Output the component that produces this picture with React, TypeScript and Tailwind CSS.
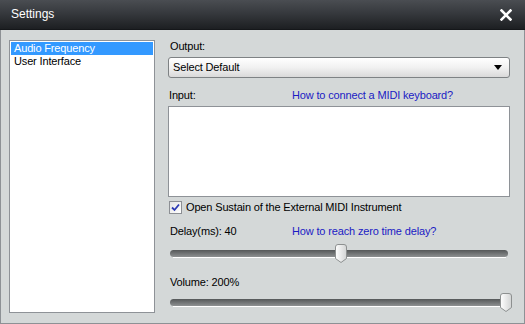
import React, { useState } from 'react';

const ITEMS = ['Audio Frequency', 'User Interface'];

// Small XP-style slider with a pointed thumb
const Slider: React.FC<{ value: number }> = ({ value }) => (
  <div className="relative h-[19px] w-[341px]">
    <div className="absolute left-[1px] right-[2px] top-[6px] h-[7px] rounded-full bg-gradient-to-b from-[#555859] to-[#8e9192]" />
    <div className="absolute left-[4px] right-[4px] top-[13px] h-[1px] bg-white" />
    <svg
      className="absolute top-0"
      style={{ left: `${value * 331}px` }}
      width="12"
      height="19"
      viewBox="0 0 12 19"
    >
      <defs>
        <linearGradient id={`thumb${value}`} x1="0" y1="0" x2="1" y2="0">
          <stop offset="0" stopColor="#ffffff" />
          <stop offset="1" stopColor="#d2d4d4" />
        </linearGradient>
      </defs>
      <path
        d="M3 0.5 H9 Q11.5 0.5 11.5 3 V14.5 L6 18.5 L0.5 14.5 V3 Q0.5 0.5 3 0.5 Z"
        fill={`url(#thumb${value})`}
        stroke="#8d9090"
      />
    </svg>
  </div>
);

export default function App() {
  const [selected, setSelected] = useState(0);
  const [sustain, setSustain] = useState(true);

  return (
    <div className="w-[525px] h-[324px] flex flex-col bg-[#d4d8d8] font-['Liberation_Sans',Arial,sans-serif] text-[11px] leading-[13px] tracking-[-0.15px] text-black select-none overflow-hidden">
      {/* title bar */}
      <div className="h-[30px] shrink-0 flex items-center justify-between pl-[11px] pr-[13px] bg-gradient-to-b from-[#4a4d52] via-[#34373b] to-[#1d1f22] border-b border-[#15171a]">
        <span className="text-white text-[12px] tracking-normal">Settings</span>
        <svg width="12" height="12" viewBox="0 0 12 12">
          <path d="M1.5 1.5 L10.5 10.5 M10.5 1.5 L1.5 10.5" stroke="#ffffff" strokeWidth="2.6" strokeLinecap="square" />
        </svg>
      </div>

      {/* body */}
      <div className="flex-1 flex gap-[13px] pl-[8px] pr-[14px] pt-[10px] border-x border-b border-[#8d9195]">
        {/* left list */}
        <div className="w-[146px] h-[273px] bg-white border border-[#8e9297] p-[1px]">
          {ITEMS.map((item, idx) => (
            <div
              key={item}
              onClick={() => setSelected(idx)}
              className={`h-[13px] pl-[3px] pr-[1px] ${selected === idx ? 'bg-[#3399ff] text-white' : 'text-black'}`}
            >
              {item}
            </div>
          ))}
        </div>

        {/* right settings */}
        <div className="flex-1 flex flex-col">
          <div className="h-[13px] pl-[2px]">Output:</div>
          <div className="mt-[4px] h-[21px] flex items-center justify-between pl-[4px] pr-[7px] rounded-[3px] border border-[#7e8284] bg-gradient-to-b from-[#ffffff] via-[#f1f1f1] to-[#d9d9d9]">
            <span>Select Default</span>
            <svg width="8" height="5" viewBox="0 0 8 5">
              <path d="M0 0 H8 L4 5 Z" fill="#000" />
            </svg>
          </div>

          <div className="mt-[11px] h-[13px] flex pl-[1px]">
            <span className="w-[123px]">Input:</span>
            <span className="text-[#1b1bc4]">How to connect a MIDI keyboard?</span>
          </div>
          <div className="mt-[4px] h-[91px] bg-white border border-[#8e9297]" />

          <label className="mt-[4px] h-[13px] flex items-center gap-[4px] pl-[1px]">
            <span
              onClick={() => setSustain(!sustain)}
              className="w-[13px] h-[13px] flex items-center justify-center border border-[#8c8f94] bg-gradient-to-br from-[#e4e4e4] to-[#ffffff]"
            >
              {sustain && (
                <svg width="9" height="9" viewBox="0 0 9 9">
                  <path d="M1 4.5 L3.5 7 L8 1.5" stroke="#2c3ab4" strokeWidth="1.8" fill="none" />
                </svg>
              )}
            </span>
            <span>Open Sustain of the External MIDI Instrument</span>
          </label>

          <div className="mt-[11px] h-[13px] flex pl-[2px]">
            <span className="w-[122px]">Delay(ms): 40</span>
            <span className="text-[#1b1bc4]">How to reach zero time delay?</span>
          </div>
          <div className="mt-[6px] pl-[1px]">
            <Slider value={0.5} />
          </div>

          <div className="mt-[13px] h-[13px] pl-[2px]">Volume: 200%</div>
          <div className="mt-[4px] pl-[1px]">
            <Slider value={1} />
          </div>
        </div>
      </div>
    </div>
  );
}
